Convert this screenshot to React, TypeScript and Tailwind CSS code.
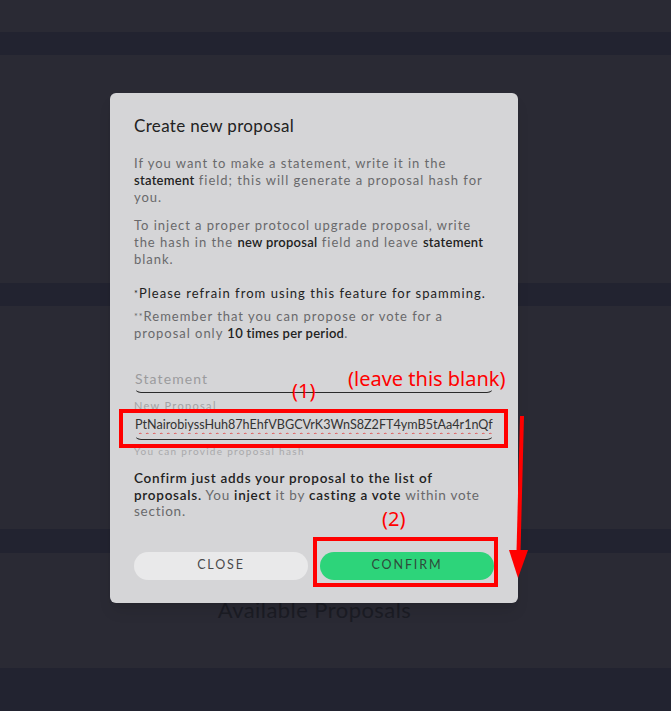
import React from 'react';

const lato = { fontFamily: 'Lato, "Open Sans", sans-serif' };
const noto = { fontFamily: '"Noto Sans", sans-serif' };

function Band() {
  return <div className="h-[23px] bg-[#222330]" />;
}

function UnderlineField({ children, className = '' }: { children: React.ReactNode; className?: string }) {
  return (
    <div className={`border-b border-x border-b-[#2a2a2a] border-x-transparent rounded-b-[7px] ${className}`}>
      {children}
    </div>
  );
}

export default function App() {
  return (
    <div className="relative w-[671px] h-[711px] overflow-hidden bg-[#2a2a34]" style={lato}>
      {/* page behind the dialog */}
      <div className="h-[32px]" />
      <Band />
      <div className="h-[228px]" />
      <Band />
      <div className="h-[223px]" />
      <div className="h-[24px] bg-[#222330]" />
      <div className="h-[115px] pt-[43px] flex justify-center">
        <h2 className="text-[22px] leading-[28px] text-[#1b1c24] tracking-[0.02em] mr-[42px]">Available Proposals</h2>
      </div>
      <div className="h-[43px] bg-[#222330]" />

      {/* dialog */}
      <div className="absolute left-[110px] top-[93px] w-[408px] rounded-[6px] bg-[#d5d5d7] shadow-lg px-[24px] pt-[23px] pb-[23px]">
        <h3 className="text-[17px] leading-[20px] text-[#222] tracking-[0.02em]">Create new proposal</h3>

        <div className="mt-[19px] text-[13px] leading-[17px] text-[#69696b] tracking-[0.075em]">
          <p>
            If you want to make a statement, write it in the <b className="font-semibold text-[#222] tracking-[0.02em]">statement</b> field; this will generate a proposal hash for you.
          </p>
          <p className="mt-[11px]">
            To inject a proper protocol upgrade proposal, write the hash in the <b className="font-semibold text-[#222] tracking-[0.02em]">new proposal</b> field and leave <b className="font-semibold text-[#222] tracking-[0.02em]">statement</b> blank.
          </p>
          <p className="mt-[17px] text-[#222] tracking-[0.08em]">
            <span className="text-[9px] align-top">*</span>Please refrain from using this feature for spamming.
          </p>
          <p className="mt-[6px]">
            <span className="text-[9px] align-top">**</span>Remember that you can propose or vote for a proposal only <b className="font-semibold text-[#222] tracking-[0.02em]">10 times per period</b>.
          </p>
        </div>

        <UnderlineField className="mt-[28px] h-[23px]">
          <div className="text-[14px] leading-[18px] text-[#9b9b9d] tracking-[0.08em]">Statement</div>
        </UnderlineField>

        <div className="mt-[6px] text-[11px] leading-[14px] text-[#a3a3a5] tracking-[0.12em]">New Proposal</div>
        <UnderlineField className="mt-[3px] h-[24px]">
          <div className="flex items-center text-[12.6px] leading-[18px] text-[#333] whitespace-nowrap overflow-hidden">
            <span className="underline decoration-wavy decoration-[#e05050] decoration-[1px] underline-offset-[3px]">
              PtNairobiyssHuh87hEhfVBGCVrK3WnS8Z2FT4ymB5tAa4r1nQf
            </span>
            <span className="w-px h-[16px] bg-[#111] shrink-0" />
          </div>
        </UnderlineField>
        <div className="mt-[5px] text-[10px] leading-[13px] text-[#a9a9ab] tracking-[0.13em]">You can provide proposal hash</div>

        <p className="mt-[12px] text-[13.5px] leading-[16.5px] text-[#69696b] tracking-[0.055em]">
          <span className="font-semibold text-[#222]">Confirm just adds your proposal to the list of proposals.</span> You{' '}
          <b className="font-semibold text-[#222]">inject</b> it by <b className="font-semibold text-[#222]">casting a vote</b> within vote section.
        </p>

        <div className="mt-[32px] grid grid-cols-2 gap-[12px]">
          <button className="h-[28px] rounded-full bg-[#e9e9ea] text-[12.5px] tracking-[0.15em] text-[#4a4a4a]">CLOSE</button>
          <button className="h-[28px] rounded-full bg-[#2dd47a] text-[12.5px] tracking-[0.15em] text-[#2f4a3a]">CONFIRM</button>
        </div>
      </div>

      {/* annotations */}
      <div className="absolute left-[119px] top-[409px] w-[389px] h-[39px] border-4 border-[#ff0000]" />
      <div className="absolute left-[313px] top-[537px] w-[185px] h-[50px] border-4 border-[#ff0000]" />
      <div className="absolute left-[292px] top-[378px] text-[20px] leading-[26px] text-[#ff0000]" style={noto}>(1)</div>
      <div className="absolute left-[348px] top-[366px] text-[20px] leading-[26px] text-[#ff0000]" style={noto}>(leave this blank)</div>
      <div className="absolute left-[382px] top-[506px] text-[20px] leading-[26px] text-[#ff0000]" style={noto}>(2)</div>
      <svg className="absolute left-0 top-0" width="671" height="711" viewBox="0 0 671 711">
        <line x1="522" y1="416" x2="518.5" y2="552" stroke="#ff0000" strokeWidth="4" />
        <polygon points="509,550 528,550 518,578" fill="#ff0000" />
      </svg>
    </div>
  );
}
